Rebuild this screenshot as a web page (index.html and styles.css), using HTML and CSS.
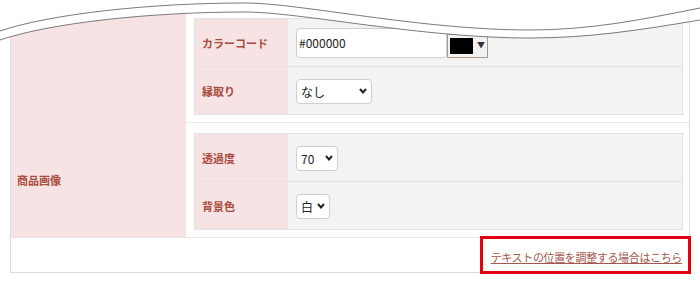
FILE: index.html
```html
<!DOCTYPE html>
<html lang="ja">
<head>
    <meta charset="UTF-8">
    <title>商品画像設定</title>
    <link rel="stylesheet" href="styles.css">
</head>
<body>

<div class="page">
    <table class="settings">
        <tr>
            <th class="group"></th>
            <td class="group-body">
                <table class="sub">
                    <tr>
                        <th>カラーコード</th>
                        <td>
                            <div class="color-field">
                                <input type="text" class="code" value="#000000">
                                <span class="picker"><span class="swatch"></span><span class="arrow">▼</span></span>
                            </div>
                        </td>
                    </tr>
                    <tr>
                        <th>縁取り</th>
                        <td>
                            <span class="select w-edge">
                                <select><option>なし</option></select>
                                <svg class="chev" width="8" height="6" viewBox="0 0 8 6"><polyline points="1,1 4,4.5 7,1"/></svg>
                            </span>
                        </td>
                    </tr>
                </table>
            </td>
        </tr>
        <tr>
            <th class="group">商品画像</th>
            <td class="group-body">
                <table class="sub">
                    <tr>
                        <th>透過度</th>
                        <td>
                            <span class="select w-alpha">
                                <select><option>70</option></select>
                                <svg class="chev" width="8" height="6" viewBox="0 0 8 6"><polyline points="1,1 4,4.5 7,1"/></svg>
                            </span>
                        </td>
                    </tr>
                    <tr>
                        <th>背景色</th>
                        <td>
                            <span class="select w-bg">
                                <select><option>白</option></select>
                                <svg class="chev" width="8" height="6" viewBox="0 0 8 6"><polyline points="1,1 4,4.5 7,1"/></svg>
                            </span>
                        </td>
                    </tr>
                </table>
            </td>
        </tr>
        <tr>
            <td colspan="2" class="foot">
                <span class="mark"><a href="#" class="adjust">テキストの位置を調整する場合はこちら</a></span>
            </td>
        </tr>
    </table>

    <!-- torn edge over the top of the screenshot -->
    <svg class="wave" width="700" height="46" viewBox="0 0 700 46">
        <path class="fill" d="M0,0 L700,0 L700,20 C640,30 590,38 530,38 C420,38 300,12 245,12 C150,12 50,23 0,40 Z"/>
        <path class="line" d="M0,31 C50,14 150,3 245,3 C300,3 420,30 530,30 C590,30 640,20 700,8"/>
        <path class="line" d="M0,40 C50,23 150,12 245,12 C300,12 420,38 530,38 C590,38 640,30 700,20"/>
    </svg>
</div>

</body>
</html>
```

FILE: styles.css
```css
html {
    background-color: white;
}
body {
    margin: 0;
    font-family: "Noto Sans CJK JP", "Noto Sans", sans-serif;
    color: #333;
}
.page {
    position: relative;
    width: 700px;
    height: 283px;
    overflow: hidden;
    padding-top: 7px;
    box-sizing: border-box;
}
.settings {
    margin-left: 10px;
    width: 680px;
    border: 1px solid #dcdcdc;
    border-spacing: 0;
}
.settings > tbody > tr > th,
.settings > tbody > tr > td {
    padding: 0;
}
.group {
    width: 169px;
    padding-left: 6px !important;
    background-color: #f7e3e3;
    border-bottom: 1px solid #e8e2e2;
    text-align: left;
    vertical-align: middle;
    font-size: 11px;
    font-weight: bold;
    color: #a84b40;
}
.group-body {
    padding: 10px 6px 7px 8px !important;
    border-bottom: 1px solid #e8e8e8;
}
.sub {
    width: 100%;
    border: 1px solid #e2e2e2;
    border-spacing: 0;
}
.sub th,
.sub td {
    height: 47px;
    padding: 0;
    border-bottom: 1px solid #e2e2e2;
    vertical-align: middle;
}
.sub tr:last-child th,
.sub tr:last-child td {
    border-bottom: none;
}
.sub th {
    width: 86px;
    padding-left: 7px;
    background-color: #f7e3e3;
    text-align: left;
    font-size: 11px;
    font-weight: bold;
    color: #a84b40;
}
.sub td {
    padding-left: 8px;
    background-color: #f3f3f3;
}
.color-field {
    display: flex;
    align-items: flex-end;
}
.code {
    width: 151px;
    height: 30px;
    box-sizing: border-box;
    border: 1px solid #cfcfcf;
    border-radius: 4px;
    padding: 0 2px;
    font-family: inherit;
    font-size: 12px;
    color: #222;
    background-color: white;
}
.picker {
    display: flex;
    align-items: flex-start;
    width: 41px;
    height: 24px;
    box-sizing: border-box;
    border: 1px solid #a8998a;
    padding: 3px 0 0 2px;
    background-color: #f2f2f2;
}
.swatch {
    width: 23px;
    height: 16px;
    background-color: black;
}
.arrow {
    margin: 3px 0 0 4px;
    font-size: 8px;
    line-height: 8px;
    color: #333;
}
.select {
    position: relative;
    display: inline-block;
    vertical-align: middle;
}
.select select {
    appearance: none;
    -webkit-appearance: none;
    height: 25px;
    box-sizing: border-box;
    border: 1px solid #cfcfcf;
    border-radius: 4px;
    padding: 0 0 0 4px;
    background-color: white;
    font-family: inherit;
    font-size: 12px;
    color: #222;
}
.w-edge select { width: 76px; }
.w-alpha select { width: 42px; }
.w-bg select { width: 34px; }
.chev {
    position: absolute;
    right: 5px;
    top: 10px;
    pointer-events: none;
}
.chev polyline {
    fill: none;
    stroke: #222;
    stroke-width: 2;
}
.foot {
    height: 33px;
    padding: 1px 1px 0 0 !important;
    text-align: right;
    vertical-align: top;
}
.mark {
    display: inline-block;
    height: 32px;
    box-sizing: border-box;
    padding: 8px 6px 0 8px;
    outline: 3px solid #e0000f;
    line-height: 16px;
}
.adjust {
    font-size: 11px;
    letter-spacing: -0.35px;
    color: #a4574c;
}
.wave {
    position: absolute;
    left: 0;
    top: 0;
}
.wave .fill {
    fill: white;
}
.wave .line {
    fill: none;
    stroke: #7a7a7a;
    stroke-width: 1;
}
```
